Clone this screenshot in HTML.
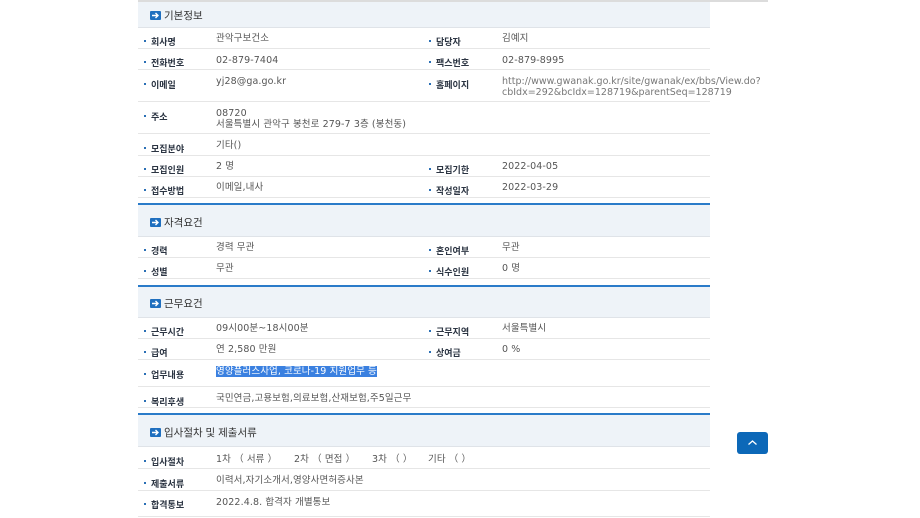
<!DOCTYPE html>
<html><head><meta charset="utf-8"><style>
*{margin:0;padding:0;box-sizing:border-box}
body{width:920px;height:518px;background:#fff;position:relative;overflow:hidden;font-family:"Liberation Sans","Noto Sans CJK KR","NanumGothic",sans-serif}
.topline{position:absolute;left:138px;top:0;width:630px;height:2px;background:#dcdcdc}
.sec{position:absolute;left:138px;width:572px;background:#eef3f8;border-bottom:1px solid #dfe3e8}
.sec.b{border-top:2px solid #2a7bc9}
.sec span{position:absolute;left:12px;font-size:10.5px;color:#333;display:flex;align-items:center;gap:3px}
.ic{display:inline-block;width:11px;height:9px;background:#1f6fbf;border-radius:1px;position:relative}
.ic svg{position:absolute;left:0;top:0}
.div{position:absolute;left:138px;width:572px;height:1px;background:#e6e6e6}
.l{position:absolute;font-size:9px;color:#2b3442;font-weight:bold;white-space:nowrap}
.l:before{content:"";position:absolute;left:-7px;top:5px;width:2px;height:2px;background:#2a6fb5}
.v{position:absolute;font-family:"DejaVu Sans","Noto Sans CJK KR",sans-serif;font-size:9.5px;letter-spacing:0.1px;color:#555;white-space:nowrap;line-height:11px}
.hl{background:#3a80e0;color:#fff}
.top{position:absolute;left:737px;top:432px;width:31px;height:22px;background:#0c68b8;border-radius:3px}
</style></head><body>
<div class="topline"></div>

<div class="sec" style="top:2px;height:26px"><span style="top:6px"><i class="ic"><svg width="11" height="9"><path d="M2 4.5h6M5.5 2l2.5 2.5-2.5 2.5" stroke="#fff" stroke-width="1.4" fill="none"/></svg></i>기본정보</span></div>
<div class="l" style="left:151px;top:35px">회사명</div><div class="v" style="left:216px;top:33px">관악구보건소</div>
<div class="l" style="left:436px;top:35px">담당자</div><div class="v" style="left:502px;top:33px">김예지</div>
<div class="div" style="top:48px"></div>
<div class="l" style="left:151px;top:56px">전화번호</div><div class="v" style="left:216px;top:55px">02-879-7404</div>
<div class="l" style="left:436px;top:56px">팩스번호</div><div class="v" style="left:502px;top:55px">02-879-8995</div>
<div class="div" style="top:69px"></div>
<div class="l" style="left:151px;top:78px">이메일</div><div class="v" style="left:216px;top:76px">yj28@ga.go.kr</div>
<div class="l" style="left:436px;top:78px">홈페이지</div><div class="v" style="left:502px;top:76px;color:#777;letter-spacing:0">http://www.gwanak.go.kr/site/gwanak/ex/bbs/View.do?<br>cbIdx=292&amp;bcIdx=128719&amp;parentSeq=128719</div>
<div class="div" style="top:101px"></div>
<div class="l" style="left:151px;top:110px">주소</div><div class="v" style="left:216px;top:108px">08720<br>서울특별시 관악구 봉천로 279-7 3층 (봉천동)</div>
<div class="div" style="top:133px"></div>
<div class="l" style="left:151px;top:142px">모집분야</div><div class="v" style="left:216px;top:140px">기타()</div>
<div class="div" style="top:155px"></div>
<div class="l" style="left:151px;top:163px">모집인원</div><div class="v" style="left:216px;top:161px">2 명</div>
<div class="l" style="left:436px;top:163px">모집기한</div><div class="v" style="left:502px;top:161px">2022-04-05</div>
<div class="div" style="top:176px"></div>
<div class="l" style="left:151px;top:184px">접수방법</div><div class="v" style="left:216px;top:182px">이메일,내사</div>
<div class="l" style="left:436px;top:184px">작성일자</div><div class="v" style="left:502px;top:182px">2022-03-29</div>
<div class="div" style="top:197px"></div>

<div class="sec b" style="top:203px;height:34px"><span style="top:10px"><i class="ic"><svg width="11" height="9"><path d="M2 4.5h6M5.5 2l2.5 2.5-2.5 2.5" stroke="#fff" stroke-width="1.4" fill="none"/></svg></i>자격요건</span></div>
<div class="l" style="left:151px;top:244px">경력</div><div class="v" style="left:216px;top:242px">경력 무관</div>
<div class="l" style="left:436px;top:244px">혼인여부</div><div class="v" style="left:502px;top:242px">무관</div>
<div class="div" style="top:257px"></div>
<div class="l" style="left:151px;top:265px">성별</div><div class="v" style="left:216px;top:263px">무관</div>
<div class="l" style="left:436px;top:265px">식수인원</div><div class="v" style="left:502px;top:263px">0 명</div>
<div class="div" style="top:278px"></div>

<div class="sec b" style="top:285px;height:33px"><span style="top:9px"><i class="ic"><svg width="11" height="9"><path d="M2 4.5h6M5.5 2l2.5 2.5-2.5 2.5" stroke="#fff" stroke-width="1.4" fill="none"/></svg></i>근무요건</span></div>
<div class="l" style="left:151px;top:325px">근무시간</div><div class="v" style="left:216px;top:323px">09시00분~18시00분</div>
<div class="l" style="left:436px;top:325px">근무지역</div><div class="v" style="left:502px;top:323px">서울특별시</div>
<div class="div" style="top:338px"></div>
<div class="l" style="left:151px;top:346px">급여</div><div class="v" style="left:216px;top:344px">연 2,580 만원</div>
<div class="l" style="left:436px;top:346px">상여금</div><div class="v" style="left:502px;top:344px">0 %</div>
<div class="div" style="top:359px"></div>
<div class="l" style="left:151px;top:368px">업무내용</div><div class="v" style="left:216px;top:366px"><span class="hl">영양플러스사업, 코로나-19 지원업무 등</span></div>
<div class="div" style="top:386px"></div>
<div class="l" style="left:151px;top:395px">복리후생</div><div class="v" style="left:216px;top:393px">국민연금,고용보험,의료보험,산재보험,주5일근무</div>
<div class="div" style="top:407px"></div>

<div class="sec b" style="top:413px;height:34px"><span style="top:10px"><i class="ic"><svg width="11" height="9"><path d="M2 4.5h6M5.5 2l2.5 2.5-2.5 2.5" stroke="#fff" stroke-width="1.4" fill="none"/></svg></i>입사절차 및 제출서류</span></div>
<div class="l" style="left:151px;top:455px">입사절차</div>
<div class="v" style="left:216px;top:454px">1차 （ 서류 ）</div>
<div class="v" style="left:294px;top:454px">2차 （ 면접 ）</div>
<div class="v" style="left:372px;top:454px">3차 （ ）</div>
<div class="v" style="left:428px;top:454px">기타 （ ）</div>
<div class="div" style="top:468px"></div>
<div class="l" style="left:151px;top:477px">제출서류</div><div class="v" style="left:216px;top:475px">이력서,자기소개서,영양사면허증사본</div>
<div class="div" style="top:490px"></div>
<div class="l" style="left:151px;top:498px">합격통보</div><div class="v" style="left:216px;top:497px">2022.4.8. 합격자 개별통보</div>
<div class="div" style="top:516px"></div>

<div class="top"><svg width="31" height="22"><path d="M11.5 12.5l4-3.5 4 3.5" stroke="#fff" stroke-width="1.3" fill="none"/></svg></div>
</body></html>
